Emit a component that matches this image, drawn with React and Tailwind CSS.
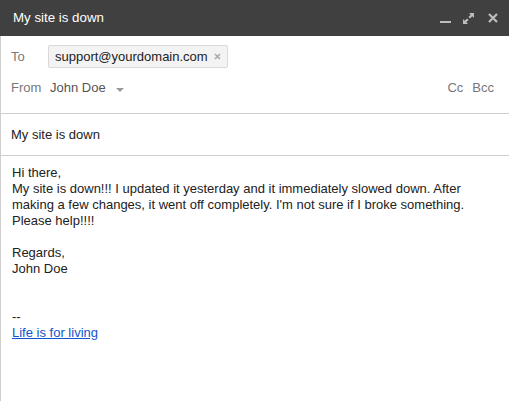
export default function App() {
  return (
    <div className="w-[509px] h-[401px] bg-white overflow-hidden text-[13px] text-[#222]" style={{ fontFamily: '"Liberation Sans", Arial, sans-serif' }}>
      <div className="h-[36px] bg-[#404040] flex items-center pl-[13px] pr-[11px]">
        <span className="text-white text-[13.3px] flex-1">My site is down</span>
        <div className="flex items-center">
          <svg width="11" height="12" viewBox="0 0 11 12"><rect x="0" y="9" width="11" height="2" fill="#bdbdbd" /></svg>
          <svg className="ml-[12px]" width="11" height="11" viewBox="0 0 11 11" fill="#bdbdbd">
            <path d="M6 0h5v5L9.3 3.3 7 5.6 5.4 4 7.7 1.7z" />
            <path d="M5 11H0V6l1.7 1.7L4 5.4 5.6 7 3.3 9.3z" />
          </svg>
          <svg className="ml-[14px]" width="10" height="10" viewBox="0 0 10 10"><path d="M1 1l8 8M9 1l-8 8" stroke="#bdbdbd" strokeWidth="2.2" /></svg>
        </div>
      </div>
      <div className="border-l border-[#cfcfcf] h-[365px]">
        <div className="h-[78px] border-b border-[#cfcfcf] pt-[9px] pl-[10px] pr-[15px]">
          <div className="flex items-center h-[23px]">
            <span className="text-[#777] w-[37px]">To</span>
            <span className="h-[23px] flex items-center bg-[#f3f3f3] border border-[#d9d9d9] rounded-[2px] pl-[6px] pr-[6px]">
              <span>support@yourdomain.com</span>
              <svg className="ml-[6px]" width="7" height="7" viewBox="0 0 7 7"><path d="M1 1l5 5M6 1l-5 5" stroke="#a8a8a8" strokeWidth="1.6" /></svg>
            </span>
          </div>
          <div className="flex items-center mt-[12px] h-[16px]">
            <span className="text-[#777] w-[39px]">From</span>
            <span className="text-[#555]">John Doe</span>
            <svg className="ml-[10px] mt-[3px]" width="8" height="4" viewBox="0 0 8 4"><path d="M0 0h8L4 4z" fill="#999" /></svg>
            <span className="flex-1" />
            <span className="text-[#777]">Cc</span>
            <span className="text-[#777] ml-[9px]">Bcc</span>
          </div>
        </div>
        <div className="h-[42px] border-b border-[#cfcfcf] flex items-center pl-[10px]">
          <span>My site is down</span>
        </div>
        <div className="pl-[11px] pt-[9px] pr-[30px] leading-[16px]">
          <div>Hi there,</div>
          <div>My site is down!!! I updated it yesterday and it immediately slowed down. After making a few changes, it went off completely. I'm not sure if I broke something. Please help!!!!</div>
          <div className="h-[16px]" />
          <div>Regards,</div>
          <div>John Doe</div>
          <div className="h-[32px]" />
          <div>--</div>
          <a href="#" className="text-[#1155cc] underline">Life is for living</a>
        </div>
      </div>
    </div>
  );
}
